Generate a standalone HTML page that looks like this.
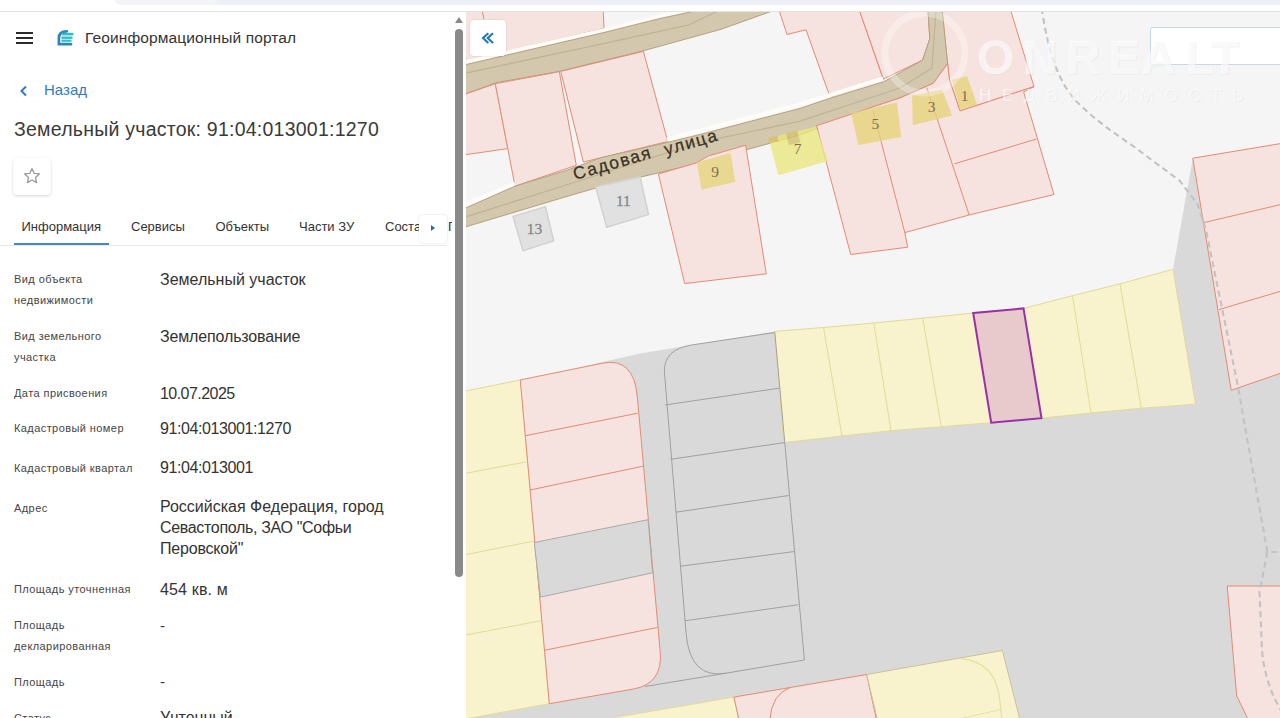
<!DOCTYPE html>
<html><head><meta charset="utf-8">
<style>
*{margin:0;padding:0;box-sizing:border-box}
html,body{width:1280px;height:718px;overflow:hidden;background:#fff;font-family:"Liberation Sans",sans-serif;color:#333}
.abs{position:absolute;white-space:nowrap}
#topbar{position:absolute;left:0;top:0;width:1280px;height:12px;background:#fff;border-bottom:1px solid #e2e2e2}
#pill{position:absolute;left:115px;top:-6px;width:1200px;height:11px;background:linear-gradient(90deg,#f4f4f8 0,#f4f4f8 95px,#eceef8 110px);border-radius:6px}
#map{position:absolute;left:0;top:0}
#panel{position:absolute;left:0;top:12px;width:466px;height:706px;background:#fff}
.lab{position:absolute;left:14px;font-size:11px;letter-spacing:0.42px;color:#454545;line-height:21px;white-space:nowrap}
.val{position:absolute;left:160px;font-size:15px;letter-spacing:0.45px;color:#333;line-height:21px;white-space:nowrap}
.tab{position:absolute;top:207px;font-size:13px;color:#333;white-space:nowrap}
</style></head><body>
<svg id="map" width="1280" height="718" viewBox="0 0 1280 718">
<defs><clipPath id="mc"><rect x="466" y="12" width="814" height="706"/></clipPath></defs>
<g clip-path="url(#mc)">
<rect x="466" y="12" width="814" height="706" fill="#f5f5f5"/>
<!-- big gray area -->
<polygon fill="#d9d9d9" points="466,393 520.3,381 602.5,362 640,353.4 774.6,331.4 823.5,327.5 873.8,323 922.7,318.2 973.2,313 1023.5,308.4 1072.5,295.7 1120,283.8 1173,269.3 1192.8,158.2 1280,144 1280,718 466,718"/>
<!-- pink above upper road -->
<polygon fill="#f6e3df" stroke="#e58a73" stroke-width="1" points="460,5 603,5 604,28.5 466,60.5"/>
<line x1="482" y1="10" x2="484" y2="19" stroke="#e58a73" stroke-width="1"/>
<!-- upper road -->
<polyline fill="none" stroke="#fdfcf8" stroke-width="3.5" points="466,61.5 604,30 660,16 700,7"/>
<polygon fill="#d3c8ae" stroke="#b3a27f" stroke-width="1" points="460,66 604,32.5 660,18.5 700,10 775,10 721,29.3 644,50.6 559,71.4 496,82.7 460,96"/>
<polyline fill="none" stroke="#c2b394" stroke-width="1.3" points="466,73 600,44.3 688.6,25 720,10"/>
<!-- pink parcels between roads -->
<polygon fill="#f6e3df" stroke="#e58a73" stroke-width="1" points="460,96 495.3,83.7 507.8,148.6 460,155.5"/>
<polygon fill="#f6e3df" stroke="#e58a73" stroke-width="1" points="495.3,83.7 559.3,71.7 576.3,165.3 515,186.2"/>
<polygon fill="#f6e3df" stroke="#e58a73" stroke-width="1" points="560.7,71.4 643.4,51.4 667.8,141.5 583.4,162"/>
<polygon fill="#f6e3df" stroke="#e58a73" stroke-width="1" points="779,10 787,34.5 806,29.8 830,97 883.4,79.7 859.3,10"/>
<polygon fill="#f6e3df" stroke="#e58a73" stroke-width="1" points="859.3,10 883.4,79 922.6,60.1 929.8,38.7 928,10"/>
<polygon fill="#f6e3df" stroke="#e58a73" stroke-width="1" points="942,10 1010.5,10 1034,86.6 960,111 949.4,79.7 947.6,63.7"/>
<!-- lower road white strip -->
<polyline fill="none" stroke="#fdfcf8" stroke-width="4" points="466,204.5 515,183.5"/>
<polyline fill="none" stroke="#fdfcf8" stroke-width="4" points="667,139.5 700,130.5 800,104.5 829,95.5 883,78.5"/>
<!-- lower road -->
<polygon fill="#d3c8ae" stroke="#b3a27f" stroke-width="1" points="460,210.5 515,186.2 566,170.6 600,158 667,142.5 700,134.5 800,108.4 829,98.6 883.5,81.8 922.6,60.1 929.8,38.7 928,10 942.2,10 947.6,63.7 933.3,83.3 900,97.9 871,107.6 800,135 749,149 700,162.9 600,186.8 566,196.7 460,228.6"/>
<polyline fill="none" stroke="#c2b394" stroke-width="1.3" points="466,216.8 566,185 700,142.3 800,121.2 900,88 932,68 936,10"/>
<!-- pink parcels below lower road -->
<polygon fill="#f6e3df" stroke="#e58a73" stroke-width="1" points="658.4,174 696,163 708.4,156 745.6,145.2 766.3,273.8 684.7,283.6"/>
<polygon fill="#f6e3df" stroke="#e58a73" stroke-width="1" points="816.6,125.7 871,107.6 900,97.9 933.3,83.3 947.6,63.7 949.4,79.7 960,111 1034,86.6 1023.6,91.9 1054,194.5 969.2,215 904.8,232.6 907.7,247.2 850.7,254.5"/>
<polyline fill="none" stroke="#e58a73" stroke-width="1" points="873,110.4 904.8,232.6"/>
<polyline fill="none" stroke="#e58a73" stroke-width="1" points="926.8,87.8 969.2,215"/>
<polyline fill="none" stroke="#e58a73" stroke-width="1" points="954.5,163.8 1036.4,139"/>
<!-- right column pink -->
<polygon fill="#f6e3df" stroke="#e58a73" stroke-width="1" points="1192.8,158.2 1290,142 1290,370 1231.2,390.3"/>
<line x1="1203" y1="222.8" x2="1280" y2="204.7" stroke="#e58a73"/>
<line x1="1219" y1="309.6" x2="1280" y2="291.4" stroke="#e58a73"/>
<!-- buildings -->
<polygon fill="#e1e1e1" stroke="#d2d2d2" stroke-width="1.5" points="513,216.5 545.4,206.7 553.7,240.7 523,250.8"/>
<polygon fill="#e1e1e1" stroke="#d2d2d2" stroke-width="1.5" points="595.6,186.8 640.1,177 648.5,214.6 606.7,227.2"/>
<g opacity="0.8">
<polygon fill="#e6d47c" points="696.8,162.5 730.5,152.9 735.3,181.7 701.6,189.7"/>
<polygon fill="#ebe780" points="768.6,138 816,126.4 828,160.9 778.5,175.3"/>
<polygon fill="#d2c46e" points="786,133.4 797,130.6 800.6,142.4 788.7,145.2"/>
<polygon fill="#d2c46e" points="768,137.5 777.6,135.5 778.5,141.5 769,143"/>
<polygon fill="#e6d47c" points="851.3,113 897,102.5 901.2,137 858.4,145.2"/>
<polygon fill="#e6d47c" points="912,95.8 942.2,89.6 952,115.4 912.8,125.2"/>
<polygon fill="#e6d47c" points="952,79.7 967.2,76.2 977,104.7 960,110"/>
</g>
<g font-family="Liberation Serif" font-size="15.5" fill="#7f6e5a" text-anchor="middle">
<text x="534.5" y="234" fill="#888888" stroke="#888888" stroke-width="0.3">13</text>
<text x="623.4" y="206" fill="#888888" stroke="#888888" stroke-width="0.3">11</text>
<text x="715" y="177">9</text>
<text x="797.7" y="153.5">7</text>
<text x="875.4" y="129">5</text>
<text x="931.5" y="112">3</text>
<text x="964.5" y="100.5">1</text>
</g>
<g font-family="Liberation Sans" font-size="17.5" letter-spacing="1.5" fill="#3b3122" stroke="#3b3122" stroke-width="0.25">
<text transform="translate(575,180) rotate(-16)">Садовая</text>
<text transform="translate(666,155.5) rotate(-16)">улица</text>
</g>
<!-- middle yellow row -->
<polygon fill="#f8f3cc" stroke="#e2db98" stroke-width="1" points="774.6,331.4 823.5,327.5 873.8,323 922.7,318.2 973.2,313 1023.5,308.4 1072.5,295.7 1120,283.8 1173,269.3 1195.5,404.2 1141.3,408.2 1091,413 1041.5,418.2 991.2,422.7 941.3,426.7 891,430.7 842,436 783.8,442.6"/>
<g stroke="#e2db98" stroke-width="1">
<line x1="823.5" y1="327.5" x2="842" y2="436"/>
<line x1="873.8" y1="323" x2="891" y2="430.7"/>
<line x1="922.7" y1="318.2" x2="941.3" y2="426.7"/>
<line x1="1072.5" y1="295.7" x2="1091" y2="413"/>
<line x1="1120" y1="283.8" x2="1141.3" y2="408.2"/>
</g>
<polygon fill="#e8c9cc" stroke="#9a30a8" stroke-width="2" points="973.2,313 1023.5,308.4 1041.5,418.2 991.2,422.7"/>
<!-- left yellow column -->
<polygon fill="#f8f3cc" stroke="#e2db98" stroke-width="1" points="460,392.2 520.3,379.9 549.3,703.7 460,720"/>
<g stroke="#e2db98" stroke-width="1">
<line x1="466" y1="473.2" x2="526" y2="462"/>
<line x1="466" y1="554.6" x2="534.3" y2="541"/>
<line x1="466" y1="635" x2="540.4" y2="620.8"/>
</g>
<!-- pink block left -->
<path fill="#f6e3df" stroke="#e58a73" stroke-width="1" d="M520.3,379.9 L602.5,363.2 Q633.7,357 637.3,396.6 L660.2,651.7 Q663.1,684 633,689.1 L549.3,703.7 Z"/>
<polygon fill="#d9d9d9" stroke="#a9a9a9" stroke-width="1" points="534.3,542.5 648.1,519.7 652.6,572.8 540.4,597.1"/>
<g stroke="#e58a73" stroke-width="1">
<line x1="526" y1="435.6" x2="637.3" y2="413.3"/>
<line x1="530" y1="490" x2="642.9" y2="466.2"/>
<line x1="545" y1="650.2" x2="657.2" y2="627.5"/>
</g>
<!-- gray rounded block -->
<path fill="none" stroke="#a0a0a0" stroke-width="1" d="M774.8,332.5 L691.5,345 Q663.6,349.4 664.4,372 L686.1,633.5 Q690,679.3 726,673.2 L804.4,660 Z"/>
<g stroke="#a0a0a0" stroke-width="1">
<line x1="665" y1="405" x2="779" y2="388.2"/>
<line x1="670.4" y1="459.3" x2="784.6" y2="442.6"/>
<line x1="676" y1="512.2" x2="788.8" y2="495.5"/>
<line x1="680.5" y1="566.2" x2="794" y2="551.6"/>
<line x1="685" y1="620.8" x2="798.4" y2="604.7"/>
</g>
<line x1="645" y1="686.5" x2="726" y2="673.2" stroke="#a0a0a0" stroke-width="1"/>
<!-- bottom -->
<polygon fill="#f8f3cc" stroke="#e2db98" stroke-width="1" points="600,720 733.9,697.1 739,720"/>
<polygon fill="#f6e3df" stroke="#e58a73" stroke-width="1" points="733.9,697.1 866.7,674.5 876.5,720 739,720"/>
<path fill="none" stroke="#e58a73" stroke-width="1" d="M789.7,687.8 Q772,694 769.7,720"/>
<polygon fill="#f8f3cc" stroke="#c9c39a" stroke-width="1" points="866.7,674.5 1002.4,650.5 1020,720 877.5,720"/>
<path fill="none" stroke="#e6e0a0" stroke-width="1.2" d="M960.8,658.6 Q995,662 999.4,697.2 L1002,720"/>
<line x1="962.8" y1="718" x2="1001.4" y2="709.4" stroke="#e6e0a0"/>
<polygon fill="#f6e3df" stroke="#e58a73" stroke-width="1" points="1227.2,586 1290,586 1290,720 1248.4,720 1236.7,695.9"/>
<!-- dashed line -->
<path fill="none" stroke="#c2c2c2" stroke-width="2.1" stroke-dasharray="6,4" d="M1041.6,8 C1048,50 1058,85 1080.7,105.6 C1096,120 1112,132 1131,144.5 L1180,181 L1197.8,204.6 L1206,230 L1236.7,380 L1267.3,552 L1276.7,552 M1267.3,552 L1259.5,592 L1262,650 Q1265,685 1282,712"/>
<!-- watermark -->
<rect x="1150.5" y="27.5" width="140" height="37" rx="2" fill="#ffffff" stroke="#c6d8e6"/>
<g opacity="0.35" fill="#e0e0e0" font-family="Liberation Sans">
<text x="978 1024 1067 1109 1142 1186 1211" y="75" font-weight="700" font-size="48">ONREALT</text>
<text x="980" y="102" font-size="17" letter-spacing="10.6">НЕДВИЖИМОСТЬ</text>
</g>
<g opacity="0.6" fill="#ffffff" font-family="Liberation Sans">
<circle cx="925" cy="53" r="40" fill="none" stroke="#ffffff" stroke-width="7" opacity="0.5"/>
<text x="977 1023 1066 1108 1141 1185 1210" y="73.8" font-weight="700" font-size="48">ONREALT</text>
<text x="979" y="101" font-size="17" letter-spacing="10.6">НЕДВИЖИМОСТЬ</text>
</g>
</g>
<!-- collapse button -->
</svg>
<div style="position:absolute;left:470px;top:20px;width:36px;height:36px;border-radius:4px;background:#fff;box-shadow:0 0 2px rgba(0,0,0,0.15)"><svg width="36" height="36" viewBox="470 20 36 36" style="position:absolute;left:0;top:0"><path d="M488.3,33.3 L483,38 L488.3,43 M493,33.3 L487.7,38 L493,43" fill="none" stroke="#2479b0" stroke-width="2.1"/></svg></div>

<div id="topbar"><div id="pill"></div></div>

<div id="panel">
  <!-- hamburger -->
  <div class="abs" style="left:16px;top:20px;width:17px;height:2px;background:#2b2b2b"></div>
  <div class="abs" style="left:16px;top:25px;width:17px;height:2px;background:#2b2b2b"></div>
  <div class="abs" style="left:16px;top:30px;width:17px;height:2px;background:#2b2b2b"></div>
  <!-- logo -->
  <svg class="abs" style="left:0;top:0" width="80" height="40" viewBox="0 12 80 40">
    <path d="M71,44.2 L58.9,44.2 L58.9,38 Q58.9,31.3 66.8,31.3" fill="none" stroke="#2b86b6" stroke-width="2.7" stroke-linecap="round"/>
    <rect x="61.8" y="32.8" width="11.6" height="2.6" fill="#33bccc"/>
    <rect x="61.5" y="36.5" width="11" height="2.4" fill="#33bccc"/>
    <rect x="61.5" y="39.6" width="10" height="2.2" fill="#33bccc"/>
  </svg>
  <div class="abs" style="left:85px;top:17px;font-size:15.5px;letter-spacing:0.12px;color:#333">Геоинформационный портал</div>
  <!-- back -->
  <svg class="abs" style="left:19px;top:73px" width="10" height="12" viewBox="0 0 10 12"><path d="M7,1.5 L2.5,6 L7,10.5" fill="none" stroke="#2f7bbf" stroke-width="2"/></svg>
  <div class="abs" style="left:44px;top:69px;font-size:15px;color:#2f7bbf">Назад</div>
  <div class="abs" style="left:14px;top:106px;font-size:19.5px;letter-spacing:0.24px;color:#3a3a3a">Земельный участок: 91:04:013001:1270</div>
  <!-- star button -->
  <div class="abs" style="left:13px;top:146px;width:38px;height:37px;border-radius:4px;background:#fff;box-shadow:0 1px 3px rgba(0,0,0,0.16)"></div>
  <svg class="abs" style="left:23px;top:155px" width="18" height="18" viewBox="0 0 18 18"><path d="M9,1.5 L11.2,6.4 L16.4,6.9 L12.5,10.4 L13.6,15.6 L9,13 L4.4,15.6 L5.5,10.4 L1.6,6.9 L6.8,6.4 Z" fill="none" stroke="#9a9a9a" stroke-width="1.3" stroke-linejoin="round"/></svg>
  <!-- tabs -->
  <div class="tab" style="left:21.5px">Информация</div>
  <div class="tab" style="left:131px">Сервисы</div>
  <div class="tab" style="left:215.5px">Объекты</div>
  <div class="tab" style="left:299px">Части ЗУ</div>
  <div class="tab" style="left:385px;width:34px;overflow:hidden">Состав</div>
  <div class="tab" style="left:448px;width:4px;overflow:hidden">Г</div>
  <div class="abs" style="left:13.5px;top:231px;width:95px;height:2px;background:#4289c6"></div>
  <div class="abs" style="left:0;top:233px;width:447px;height:1px;background:#e9e9e9"></div>
  <div class="abs" style="left:419px;top:203px;width:28px;height:28px;border-radius:4px;background:#fff;box-shadow:0 0 2px rgba(0,0,0,0.18)"></div>
  <svg class="abs" style="left:429px;top:211px" width="8" height="10" viewBox="0 0 8 10"><path d="M2,2 L6,5 L2,8 Z" fill="#1f6fb0"/></svg>
  <!-- scrollbar -->
  <svg class="abs" style="left:454px;top:4px" width="10" height="8" viewBox="0 0 10 8"><path d="M1,7 L5,1 L9,7 Z" fill="#8a8a8a"/></svg>
  <div class="abs" style="left:455px;top:17px;width:8px;height:548px;border-radius:4px;background:#8a8a8a"></div>

  <!-- rows -->
  <div class="lab" style="top:257.2px">Вид объекта<br>недвижимости</div>
  <div class="val" style="top:256.5px;font-size:16px;letter-spacing:0">Земельный участок</div>
  <div class="lab" style="top:314px">Вид земельного<br>участка</div>
  <div class="val" style="top:313.5px;font-size:16px;letter-spacing:-0.15px">Землепользование</div>
  <div class="lab" style="top:371px">Дата присвоения</div>
  <div class="val" style="top:370.5px;font-size:16px;letter-spacing:-0.55px">10.07.2025</div>
  <div class="lab" style="top:406px">Кадастровый номер</div>
  <div class="val" style="top:405.5px;font-size:16px;letter-spacing:-0.4px">91:04:013001:1270</div>
  <div class="lab" style="top:445.7px">Кадастровый квартал</div>
  <div class="val" style="top:445.3px;font-size:16px;letter-spacing:-0.4px">91:04:013001</div>
  <div class="lab" style="top:486px">Адрес</div>
  <div class="val" style="top:485.3px;line-height:20.7px;font-size:16px;letter-spacing:0"><span style="letter-spacing:0">Российская Федерация, город</span><br><span style="letter-spacing:-0.33px">Севастополь, ЗАО "Софьи</span><br><span style="letter-spacing:-0.2px">Перовской"</span></div>
  <div class="lab" style="top:567.2px">Площадь уточненная</div>
  <div class="val" style="top:566.5px;font-size:16px;letter-spacing:0.15px">454 кв. м</div>
  <div class="lab" style="top:602.5px">Площадь<br>декларированная</div>
  <div class="val" style="top:602.5px">-</div>
  <div class="lab" style="top:660px">Площадь</div>
  <div class="val" style="top:659px">-</div>
  <div class="lab" style="top:695.5px">Статус</div>
  <div class="val" style="top:695px;font-size:16px;letter-spacing:0">Учтенный</div>
</div>
</body></html>
